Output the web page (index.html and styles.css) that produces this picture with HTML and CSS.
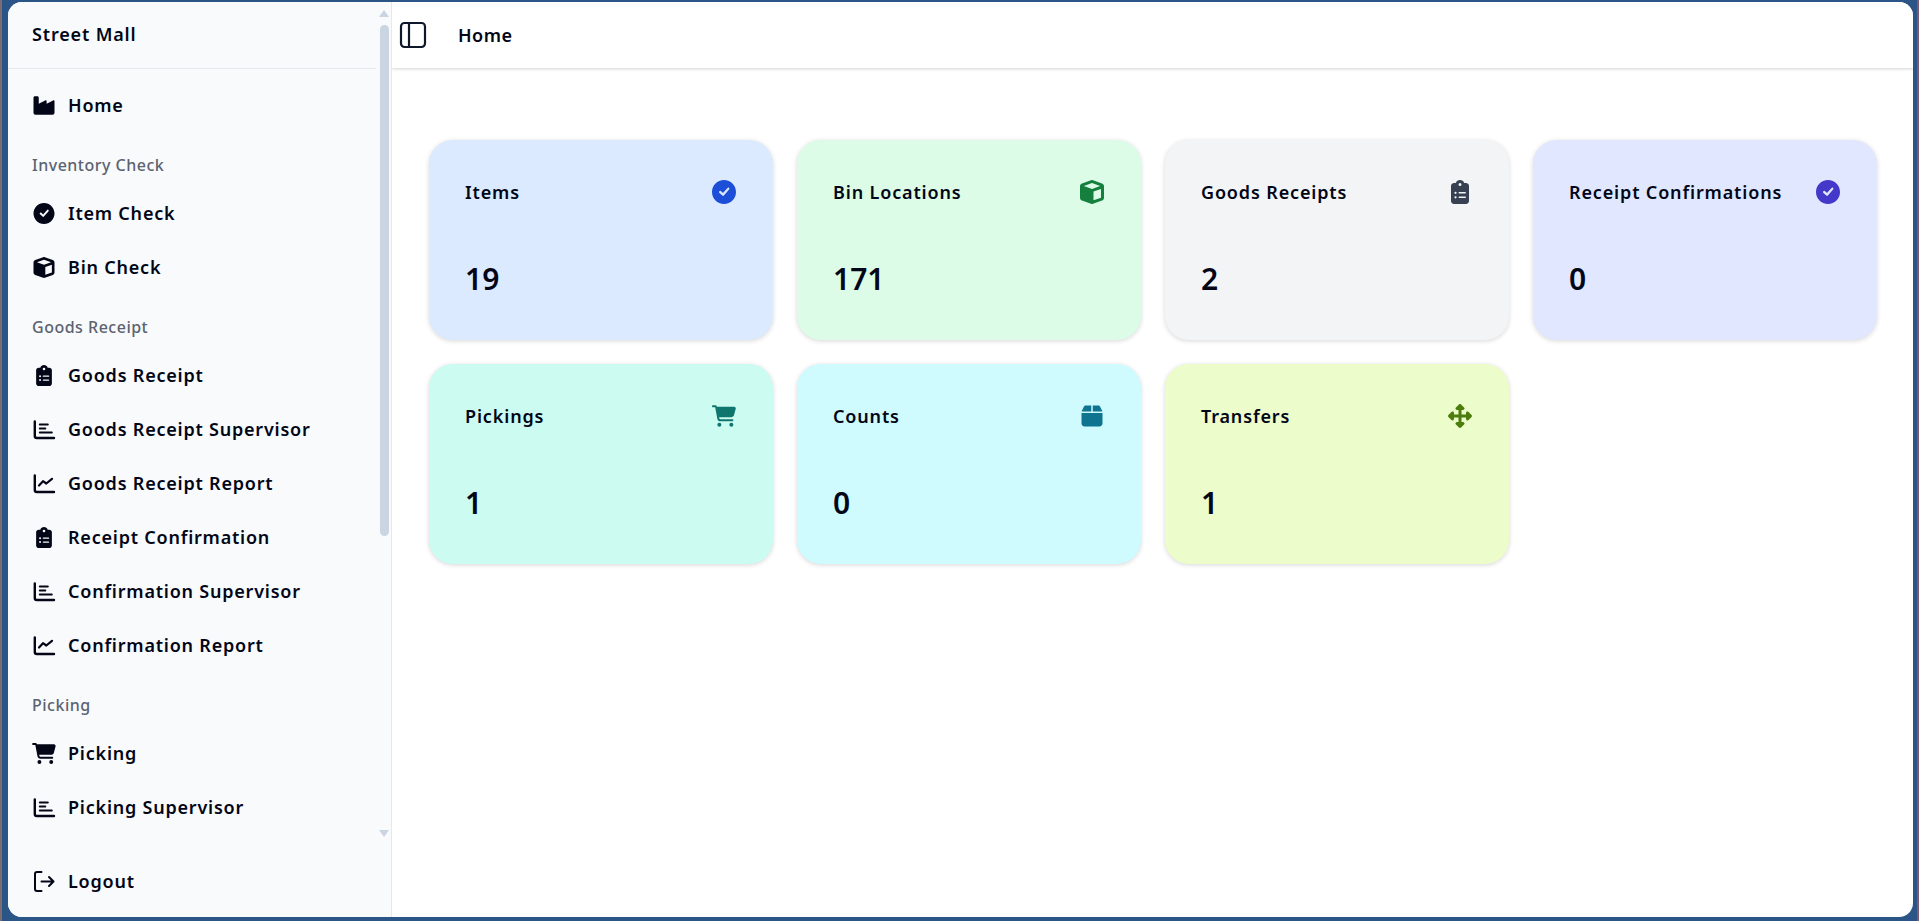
FILE: index.html
```html
<!DOCTYPE html>
<html lang="en">
<head>
<meta charset="utf-8">
<title>Street Mall - Home</title>
<link rel="stylesheet" href="styles.css">
</head>
<body>
<svg class="defs" width="0" height="0" aria-hidden="true">
  <symbol id="i-industry" viewBox="0 0 576 512"><path fill="currentColor" d="M64 32C46.300 32 32 46.300 32 64V304v48 80c0 26.500 21.500 48 48 48H496c26.500 0 48-21.500 48-48V304 152.200c0-18.200-19.400-29.700-35.400-21.100L352 215.400V152.200c0-18.200-19.400-29.700-35.400-21.100L160 215.400V64c0-17.700-14.300-32-32-32H64z"/></symbol>
  <symbol id="i-check" viewBox="1.5 1.5 21 21"><path fill="currentColor" fill-rule="evenodd" d="M1.500 12C1.500 6.200 6.200 1.500 12 1.500S22.500 6.200 22.500 12 17.800 22.500 12 22.500 1.500 17.800 1.500 12Zm15.100-2.300a1 1 0 0 0-1.500-1.300l-4 4.500-1.700-1.600a1 1 0 0 0-1.400 1.500l2.500 2.300a1 1 0 0 0 1.400-.1l4.700-5.300Z"/></symbol>
  <symbol id="i-cube" viewBox="0 0 512 512"><path fill="currentColor" d="M234.500 5.700c13.900-5 29.100-5 43.100 0l192 68.600C495 83.400 512 107.500 512 134.600V377.400c0 27-17 51.200-42.500 60.300l-192 68.600c-13.900 5-29.100 5-43.100 0l-192-68.600C17 428.600 0 404.500 0 377.400V134.600c0-27 17-51.200 42.500-60.300l192-68.600zM256 66L82.300 128 256 190l173.700-62L256 66zm32 368.600l160-57.100v-188L288 246.600v188z"/></symbol>
  <symbol id="i-clip" viewBox="0 0 384 512"><path fill="currentColor" d="M192 0c-41.800 0-77.400 26.700-90.500 64H64C28.700 64 0 92.700 0 128V448c0 35.300 28.700 64 64 64H320c35.300 0 64-28.700 64-64V128c0-35.300-28.700-64-64-64H282.500C269.400 26.700 233.800 0 192 0zm0 64a32 32 0 1 1 0 64 32 32 0 1 1 0-64zM72 272a24 24 0 1 1 48 0 24 24 0 1 1 -48 0zm104-16H304c8.800 0 16 7.200 16 16s-7.200 16-16 16H176c-8.800 0-16-7.200-16-16s7.200-16 16-16zM72 368a24 24 0 1 1 48 0 24 24 0 1 1 -48 0zm88 0c0-8.800 7.200-16 16-16H304c8.800 0 16 7.200 16 16s-7.200 16-16 16H176c-8.800 0-16-7.200-16-16z"/></symbol>
  <symbol id="i-bars" viewBox="0 0 24 21"><path fill="none" stroke="currentColor" stroke-width="2.400" stroke-linecap="round" stroke-linejoin="round" d="M2.800 2.500V17a2 2 0 0 0 2 2H22"/><path fill="none" stroke="currentColor" stroke-width="2" stroke-linecap="round" d="M7.800 5.500h8M7.800 9.500h5.500M7.800 13.500h12"/></symbol>
  <symbol id="i-line" viewBox="0 0 24 21"><path fill="none" stroke="currentColor" stroke-width="2.400" stroke-linecap="round" stroke-linejoin="round" d="M2.800 2.500V17a2 2 0 0 0 2 2H22"/><path fill="none" stroke="currentColor" stroke-width="2.200" stroke-linecap="round" stroke-linejoin="round" d="M7 12.500 11 8.200l3.300 2.300L20 5.800"/></symbol>
  <symbol id="i-cart" viewBox="0 0 576 512"><path fill="currentColor" d="M0 24C0 10.700 10.700 0 24 0H69.500c22 0 41.500 12.800 50.600 32h411c26.300 0 45.500 25 38.600 50.400l-41 152.300c-8.500 31.400-37 53.300-69.500 53.300H170.700l5.400 28.500c2.200 11.300 12.100 19.500 23.600 19.500H488c13.300 0 24 10.700 24 24s-10.700 24-24 24H199.700c-34.600 0-64.300-24.600-70.700-58.500L77.400 54.500c-.7-3.800-4-6.500-7.900-6.500H24C10.700 48 0 37.300 0 24zM128 464a48 48 0 1 1 96 0 48 48 0 1 1 -96 0zm336-48a48 48 0 1 1 0 96 48 48 0 1 1 0-96z"/></symbol>
  <symbol id="i-box" viewBox="0 0 448 512"><path fill="currentColor" d="M50.700 58.500L0 160H208V32H93.700C75.500 32 58.900 42.300 50.700 58.500zM240 160H448L397.300 58.500C389.100 42.300 372.500 32 354.300 32H240V160zm208 32H0V416c0 35.300 28.700 64 64 64H384c35.300 0 64-28.700 64-64V192z"/></symbol>
  <symbol id="i-move" viewBox="0 0 512 512"><path fill="currentColor" d="M278.600 9.400c-12.500-12.500-32.800-12.500-45.300 0l-64 64c-9.200 9.200-11.900 22.900-6.900 34.900s16.600 19.800 29.600 19.800h32v96H128V192c0-12.900-7.800-24.600-19.800-29.600s-25.700-2.200-34.900 6.900l-64 64c-12.500 12.500-12.500 32.800 0 45.300l64 64c9.200 9.200 22.900 11.900 34.900 6.900s19.800-16.600 19.800-29.600V288h96v96H192c-12.900 0-24.600 7.800-29.600 19.800s-2.200 25.700 6.900 34.900l64 64c12.500 12.500 32.800 12.500 45.300 0l64-64c9.200-9.200 11.900-22.900 6.900-34.900s-16.600-19.800-29.600-19.800H288V288h96v32c0 12.900 7.800 24.600 19.800 29.600s25.700 2.200 34.900-6.900l64-64c12.500-12.500 12.500-32.800 0-45.300l-64-64c-9.200-9.200-22.900-11.900-34.900-6.900s-19.800 16.600-19.800 29.600v32H288V128h32c12.900 0 24.600-7.800 29.600-19.800s2.200-25.700-6.900-34.900l-64-64z"/></symbol>
  <symbol id="i-logout" viewBox="0 0 24 21"><path fill="none" stroke="currentColor" stroke-width="2" stroke-linecap="round" stroke-linejoin="round" d="M9.500 1H5a2 2 0 0 0-2 2v15a2 2 0 0 0 2 2h4.500M9.500 10.500H21.500M17 6l4.500 4.500L17 15"/></symbol>
</svg>

<div class="window">
  <aside class="sidebar">
    <div class="brand">Street Mall</div>
    <nav class="nav">
      <a class="item"><svg class="ico"><use href="#i-industry"/></svg>Home</a>
      <div class="group">Inventory Check</div>
      <a class="item"><svg class="ico"><use href="#i-check"/></svg>Item Check</a>
      <a class="item"><svg class="ico"><use href="#i-cube"/></svg>Bin Check</a>
      <div class="group">Goods Receipt</div>
      <a class="item"><svg class="ico"><use href="#i-clip"/></svg>Goods Receipt</a>
      <a class="item"><svg class="ico"><use href="#i-bars"/></svg>Goods Receipt Supervisor</a>
      <a class="item"><svg class="ico"><use href="#i-line"/></svg>Goods Receipt Report</a>
      <a class="item"><svg class="ico"><use href="#i-clip"/></svg>Receipt Confirmation</a>
      <a class="item"><svg class="ico"><use href="#i-bars"/></svg>Confirmation Supervisor</a>
      <a class="item"><svg class="ico"><use href="#i-line"/></svg>Confirmation Report</a>
      <div class="group">Picking</div>
      <a class="item"><svg class="ico"><use href="#i-cart"/></svg>Picking</a>
      <a class="item"><svg class="ico"><use href="#i-bars"/></svg>Picking Supervisor</a>
    </nav>
    <div class="scrollbar" aria-hidden="true">
      <span class="arrow up"></span>
      <span class="thumb"></span>
      <span class="arrow down"></span>
    </div>
    <div class="foot">
      <a class="item"><svg class="ico"><use href="#i-logout"/></svg>Logout</a>
    </div>
  </aside>

  <main class="main">
    <header class="topbar">
      <svg class="panel" viewBox="0 0 28 28"><rect x="2" y="2" width="24" height="24" rx="3.500" fill="none" stroke="currentColor" stroke-width="2.200"/><path d="M10 2v24" fill="none" stroke="currentColor" stroke-width="2.200"/></svg>
      <span class="crumb">Home</span>
    </header>
    <section class="cards">
      <article class="card blue"><div class="row"><span class="title">Items</span><svg class="cico"><use href="#i-check"/></svg></div><div class="value">19</div></article>
      <article class="card green"><div class="row"><span class="title">Bin Locations</span><svg class="cico"><use href="#i-cube"/></svg></div><div class="value">171</div></article>
      <article class="card gray"><div class="row"><span class="title">Goods Receipts</span><svg class="cico"><use href="#i-clip"/></svg></div><div class="value">2</div></article>
      <article class="card indigo"><div class="row"><span class="title">Receipt Confirmations</span><svg class="cico"><use href="#i-check"/></svg></div><div class="value">0</div></article>
      <article class="card teal"><div class="row"><span class="title">Pickings</span><svg class="cico"><use href="#i-cart"/></svg></div><div class="value">1</div></article>
      <article class="card cyan"><div class="row"><span class="title">Counts</span><svg class="cico"><use href="#i-box"/></svg></div><div class="value">0</div></article>
      <article class="card lime"><div class="row"><span class="title">Transfers</span><svg class="cico"><use href="#i-move"/></svg></div><div class="value">1</div></article>
    </section>
  </main>
</div>
</body>
</html>
```
FILE: styles.css
```css
* { box-sizing: border-box; }
html, body { height: 100%; margin: 0; }
body {
  background: #2b5487;
  border-left: 2px solid #7d6c72;
  border-right: 2px solid #7f5a6e;
  padding: 2px 4px 4px 6px;
  overflow: hidden;
  font-family: "Noto Sans", sans-serif;
  color: #020617;
}
.defs { position: absolute; }
.window {
  display: flex;
  height: 100%;
  background: #fff;
  border-radius: 14px;
  overflow: hidden;
}
.sidebar {
  position: relative;
  display: flex;
  flex-direction: column;
  flex: 0 0 384px;
  background: #f8fafc;
  border-right: 1px solid #e2e8f0;
}
.brand {
  flex: none;
  height: 67px;
  margin-right: 15px;
  padding: 0 0 2px 24px;
  display: flex;
  align-items: center;
  border-bottom: 1px solid #e5e7eb;
  font-size: 18px;
  font-weight: 600;
  letter-spacing: .85px;
}
.nav { flex: 1; overflow: hidden; padding: 9px 0 0 24px; }
.item {
  display: flex;
  align-items: center;
  gap: 12px;
  height: 54px;
  font-size: 18px;
  font-weight: 600;
  letter-spacing: .78px;
  color: #020617;
}
.ico { width: 24px; height: 21px; flex: none; }
.group {
  height: 54px;
  padding-top: 22px;
  line-height: 22px;
  font-size: 16px;
  font-weight: 500;
  letter-spacing: .5px;
  color: #5b6270;
}
.foot { flex: none; height: 76px; padding: 13px 0 0 24px; }
.scrollbar {
  position: absolute;
  top: 8px;
  right: 2px;
  width: 10px;
  display: flex;
  flex-direction: column;
  align-items: center;
}
.thumb { width: 9px; height: 511px; margin-top: 8px; border-radius: 5px; background: #cbd5e1; }
.arrow { width: 0; height: 0; border-left: 5px solid transparent; border-right: 5px solid transparent; }
.up { border-bottom: 7px solid #cbd5e1; }
.down { margin-top: 294px; border-top: 7px solid #cbd5e1; }
.main { flex: 1; min-width: 0; }
.topbar {
  height: 66px;
  display: flex;
  align-items: center;
  padding: 0 0 1px 7px;
  gap: 31px;
  background: #fff;
  box-shadow: 0 1px 3px rgba(0, 0, 0, .18);
}
.panel { width: 28px; height: 28px; color: #0f172a; flex: none; }
.crumb { font-size: 18px; font-weight: 600; letter-spacing: .5px; }
.cards {
  display: grid;
  grid-template-columns: repeat(4, 1fr);
  gap: 24px;
  padding: 72px 36px 0 37px;
}
.card {
  height: 200px;
  padding: 36px 37px 36px 36px;
  border-radius: 24px;
  box-shadow: 0 1px 5px rgba(0, 0, 0, .16);
}
.row { display: flex; justify-content: space-between; align-items: center; height: 32px; }
.title { font-size: 18px; font-weight: 600; letter-spacing: .85px; color: #020617; }
.cico { width: 24px; height: 24px; flex: none; }
.value { margin-top: 51px; font-size: 30px; line-height: 40px; font-weight: 600; color: #020617; }
.blue { background: #dbeafe; } .blue .cico { color: #1d4ed8; }
.green { background: #dcfce7; } .green .cico { color: #15803d; }
.gray { background: #f3f4f6; } .gray .cico { color: #374151; }
.indigo { background: #e0e7ff; } .indigo .cico { color: #4338ca; }
.teal { background: #ccfbf1; } .teal .cico { color: #0f766e; }
.cyan { background: #cffafe; } .cyan .cico { color: #0e7490; }
.lime { background: #ecfccb; } .lime .cico { color: #4d7c0f; }
```
